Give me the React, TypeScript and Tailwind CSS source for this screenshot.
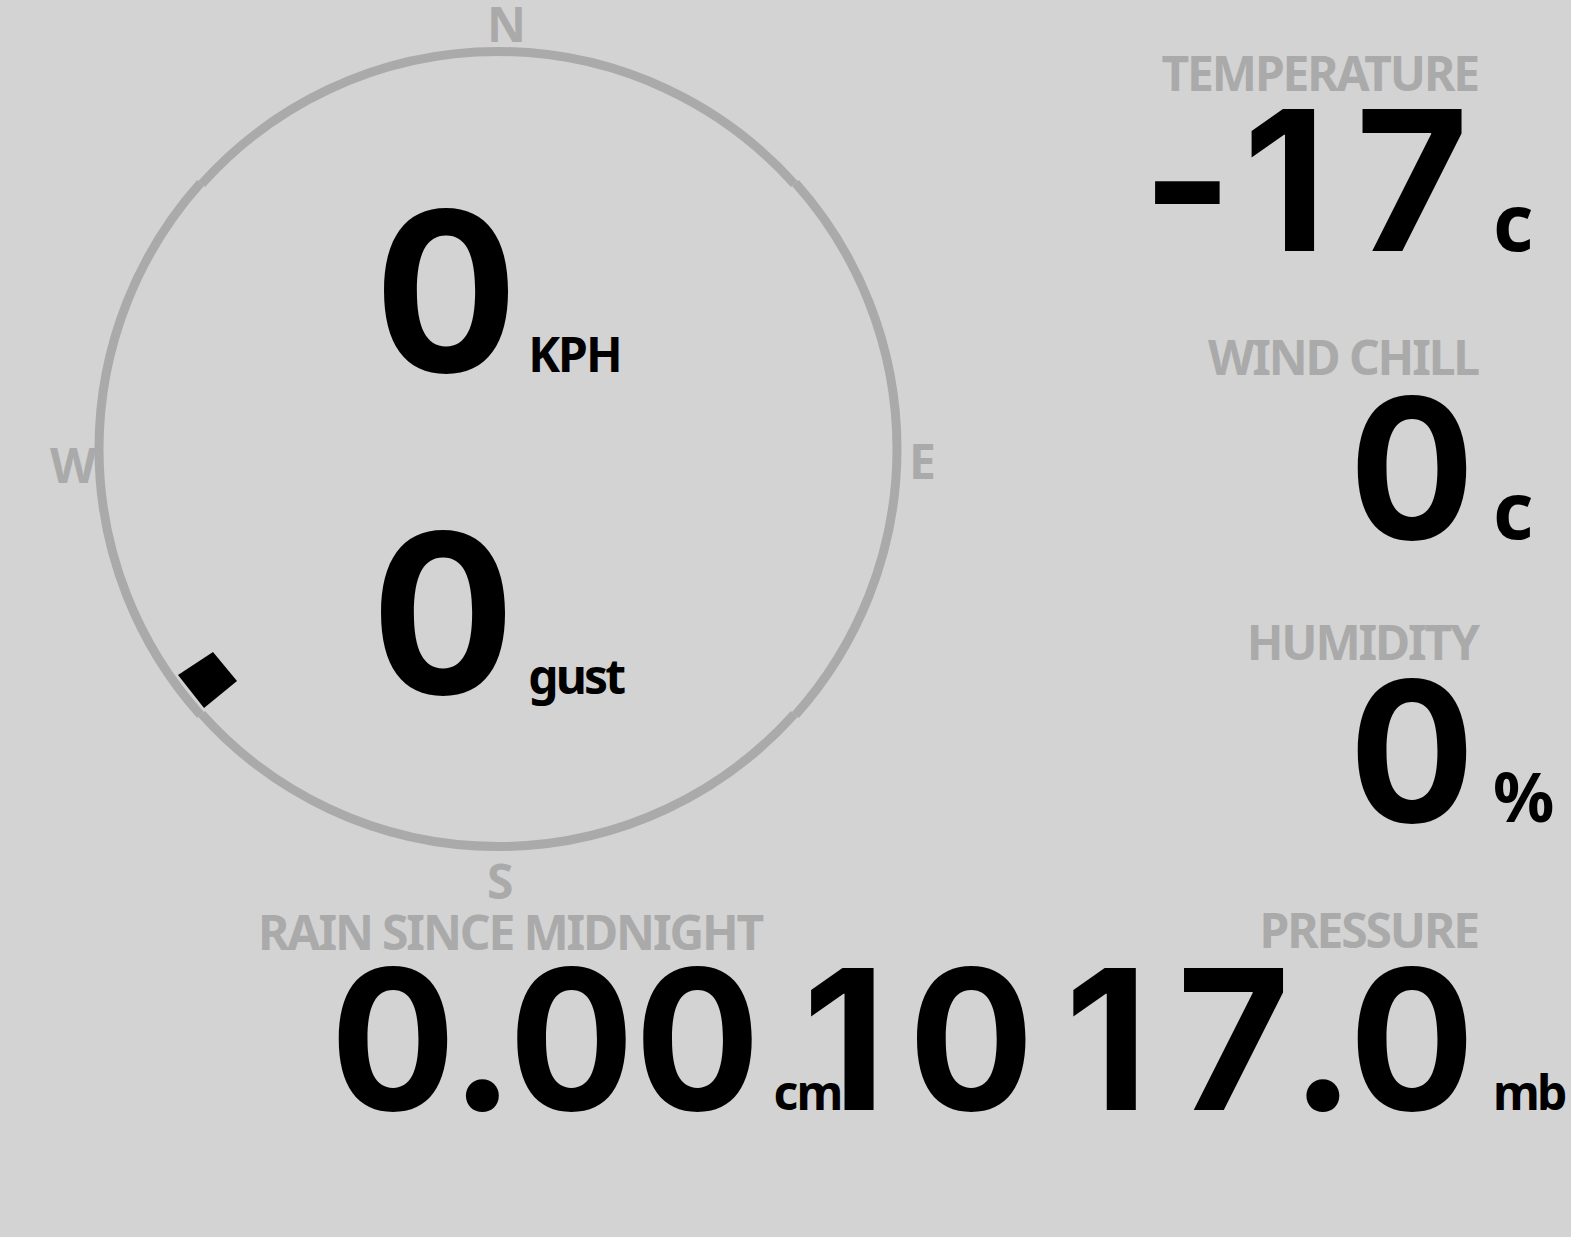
import React from "react";

const LABEL =
  "font-['Noto_Sans',sans-serif] font-bold text-[48px] leading-none tracking-[-0.045em] text-[#aaaaaa] whitespace-nowrap";
const DIGITS = "font-['Inter',sans-serif] font-bold leading-none tabular-nums text-black whitespace-nowrap";
const UNIT = "font-['Noto_Sans',sans-serif] font-bold leading-none tracking-[-0.04em] text-black whitespace-nowrap";

// tabular ones get a foot, so use the plain one on a wide cell
function Num({ text }: { text: string }) {
  return (
    <>
      {text.split("").map((ch, i) =>
        ch === "1" ? (
          <span key={i} className="normal-nums ml-[30px] mr-[22px]">
            1
          </span>
        ) : (
          <span key={i}>{ch}</span>
        ),
      )}
    </>
  );
}

// compass ring, drawn as four arcs with a small step where they meet
function arc(r: number, a0: number, a1: number) {
  const cx = 498;
  const cy = 449;
  const rad = (d: number) => (d * Math.PI) / 180;
  const x0 = cx + r * Math.cos(rad(a0));
  const y0 = cy - r * Math.sin(rad(a0));
  const x1 = cx + r * Math.cos(rad(a1));
  const y1 = cy - r * Math.sin(rad(a1));
  return `M ${x0} ${y0} A ${r} ${r} 0 0 1 ${x1} ${y1}`;
}

function Compass() {
  const p = 41.8;
  return (
    <div className="relative w-[1000px] h-[904px] shrink-0">
      <svg className="absolute inset-0" width="1000" height="904" viewBox="0 0 1000 904">
        <g fill="none" stroke="#aaaaaa" strokeWidth="9">
          <path d={arc(397.5, 180 - p, p)} />
          <path d={arc(399, p, -p)} />
          <path d={arc(397.5, -p, -180 + p)} />
          <path d={arc(399, 180 + p, 180 - p)} />
        </g>
        <polygon points="213,652 237,681 204,708 178,675" fill="#000" />
      </svg>
      <span className={`${LABEL} leading-[42px] absolute left-[487px] top-0`}>N</span>
      <span className={`${LABEL} absolute left-[487px] top-[857px]`}>S</span>
      <span className={`${LABEL} absolute left-[50px] top-[441px]`}>W</span>
      <span className={`${LABEL} absolute left-[909px] top-[437px]`}>E</span>

      <div className="relative flex flex-col">
        <div className="flex items-baseline pl-[374px] mt-[180px]">
          <span className={`${DIGITS} text-[223px]`}>0</span>
          <span className={`${UNIT} text-[48px] ml-[10px]`}>KPH</span>
        </div>
        <div className="flex items-baseline pl-[371px] mt-[99px]">
          <span className={`${DIGITS} text-[223px]`}>0</span>
          <span className={`${UNIT} text-[48px] ml-[13px] tracking-[-0.06em]`}>gust</span>
        </div>
      </div>
    </div>
  );
}

function Reading({
  label,
  sign,
  value,
  unit,
  unitSize,
  labelTop,
  valueTop,
}: {
  label: string;
  sign?: string;
  value: string;
  unit: string;
  unitSize: string;
  labelTop: string;
  valueTop: string;
}) {
  return (
    <div className="flex flex-col items-end">
      <span className={`${LABEL} mr-[93px] ${labelTop}`}>{label}</span>
      <div className={`flex items-baseline ${valueTop}`}>
        {sign && <span className={`${DIGITS} normal-nums text-[195px] -mr-[20px]`}>{sign}</span>}
        <span className={`${DIGITS} text-[195px]`}>
          <Num text={value} />
        </span>
        <span className={`${UNIT} ${unitSize} w-[96px] pl-[18px]`}>{unit}</span>
      </div>
    </div>
  );
}

export default function App() {
  return (
    <div className="w-full min-h-[1237px] bg-[#d3d3d3] overflow-hidden">
      <div className="flex h-[904px]">
        <Compass />
        <div className="flex-1 flex flex-col items-end">
          <Reading
            label="TEMPERATURE"
            sign="-"
            value="17"
            unit="c"
            unitSize="text-[78px]"
            labelTop="mt-[49px]"
            valueTop="-mt-[14px]"
          />
          <Reading
            label="WIND CHILL"
            value="0"
            unit="c"
            unitSize="text-[78px]"
            labelTop="mt-[55px]"
            valueTop="-mt-[10px]"
          />
          <Reading
            label="HUMIDITY"
            value="0"
            unit="%"
            unitSize="text-[68px]"
            labelTop="mt-[52px]"
            valueTop="-mt-[12px]"
          />
        </div>
      </div>

      <div className="flex">
        <div className="w-[770px] shrink-0 flex flex-col">
          <span className={`${LABEL} ml-[258px] mt-[4px]`}>RAIN SINCE MIDNIGHT</span>
          <div className="flex items-baseline ml-[330px] -mt-[14px]">
            <span className={`${DIGITS} text-[195px]`}>0.00</span>
            <span className={`${UNIT} text-[48px] pl-[13px]`}>cm</span>
          </div>
        </div>
        <div className="flex-1">
          <Reading
            label="PRESSURE"
            value="1017.0"
            unit="mb"
            unitSize="text-[48px] tracking-[-0.06em]"
            labelTop="mt-[2px]"
            valueTop="-mt-[12px]"
          />
        </div>
      </div>
    </div>
  );
}
